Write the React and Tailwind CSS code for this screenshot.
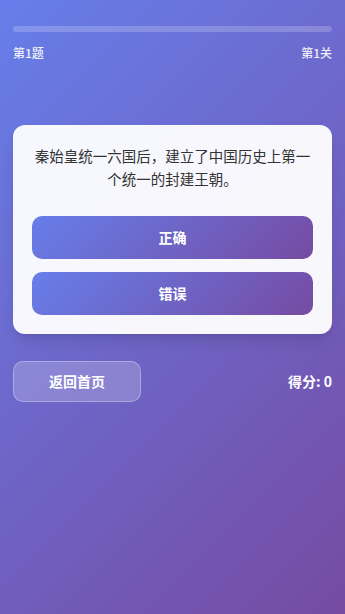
export default function App() {
  const font = { fontFamily: '"Noto Sans CJK SC", "Noto Sans", sans-serif' };
  return (
    <div
      className="min-h-[614px] w-full bg-[linear-gradient(135deg,#667eea_0%,#764ba2_100%)] px-[13px] pt-[26px]"
      style={font}
    >
      <div className="h-[6px] w-full rounded-full bg-white/20">
        <div className="h-full w-0 rounded-full bg-white" />
      </div>
      <div className="mt-[13px] flex justify-between text-[12px] font-medium leading-[16px] text-white/90">
        <span>第1题</span>
        <span>第1关</span>
      </div>

      <div className="mt-[64px] rounded-[12px] bg-white/95 px-[19px] pt-[19px] pb-[19px] shadow-lg">
        <p className="text-center text-[14.5px] leading-[23px] text-[#333]">
          秦始皇统一六国后，建立了中国历史上第一个统一的封建王朝。
        </p>
        <div className="mt-[26px] flex flex-col gap-[13px]">
          <button className="h-[43px] w-full rounded-[10px] bg-[linear-gradient(135deg,#667eea_0%,#764ba2_100%)] text-[14px] font-bold text-white">
            正确
          </button>
          <button className="h-[43px] w-full rounded-[10px] bg-[linear-gradient(135deg,#667eea_0%,#764ba2_100%)] text-[14px] font-bold text-white">
            错误
          </button>
        </div>
      </div>

      <div className="mt-[27px] flex items-center justify-between">
        <button className="h-[41px] w-[128px] rounded-[10px] border border-white/30 bg-white/20 text-[14px] font-bold text-white">
          返回首页
        </button>
        <span className="text-[14px] font-bold text-white">得分: 0</span>
      </div>
    </div>
  );
}
